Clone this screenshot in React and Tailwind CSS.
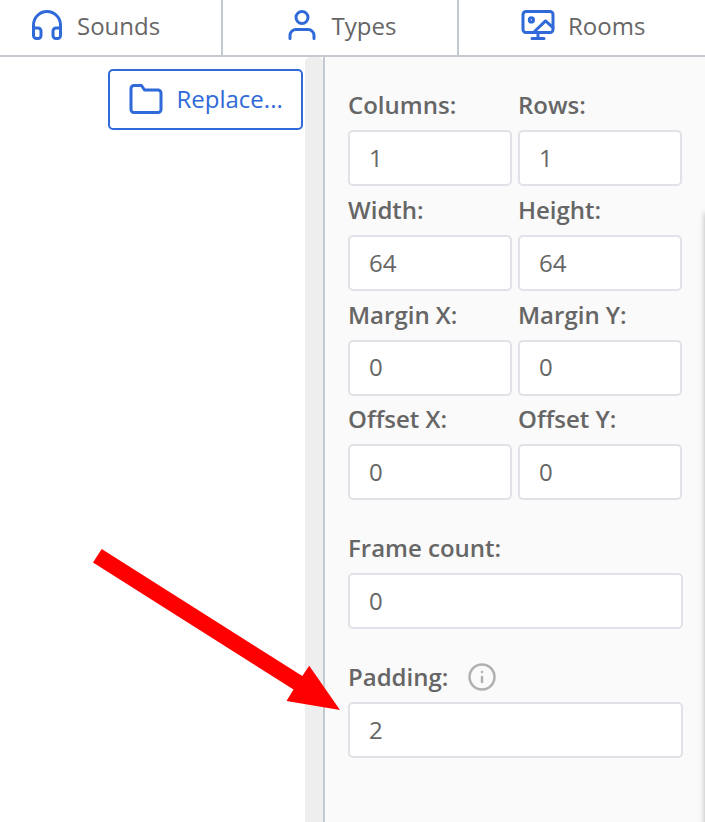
function Icon({ size = 36, className, children }) {
  return (
    <svg
      width={size}
      height={size}
      viewBox="0 0 24 24"
      fill="none"
      stroke="currentColor"
      strokeWidth="2"
      strokeLinecap="round"
      strokeLinejoin="round"
      className={className}
    >
      {children}
    </svg>
  );
}

function Headphones() {
  return (
    <Icon className="shrink-0 text-[#3069d8]">
      <path d="M3 18v-6a9 9 0 0 1 18 0v6" />
      <path d="M21 19a2 2 0 0 1-2 2h-1a2 2 0 0 1-2-2v-3a2 2 0 0 1 2-2h3zM3 19a2 2 0 0 0 2 2h1a2 2 0 0 0 2-2v-3a2 2 0 0 0-2-2H3z" />
    </Icon>
  );
}

function User() {
  return (
    <Icon className="shrink-0 text-[#3069d8]">
      <path d="M20 21v-2a4 4 0 0 0-4-4H8a4 4 0 0 0-4 4v2" />
      <circle cx="12" cy="7" r="4" />
    </Icon>
  );
}

function Room() {
  return (
    <Icon className="shrink-0 text-[#3069d8]">
      <rect x="2" y="3" width="20" height="14" rx="2" />
      <path d="M8 21h8M12 17v4" />
      <circle cx="7.6" cy="8.6" r="1.4" />
      <path d="M9 17l8-7.7 5 4.4" />
    </Icon>
  );
}

function Folder() {
  return (
    <Icon className="shrink-0">
      <path d="M22 19a2 2 0 0 1-2 2H4a2 2 0 0 1-2-2V5a2 2 0 0 1 2-2h5l2 3h9a2 2 0 0 1 2 2z" />
    </Icon>
  );
}

function Info() {
  return (
    <Icon size={30} className="shrink-0 text-[#b0b0b0]">
      <circle cx="12" cy="12" r="10" />
      <path d="M12 16v-4M12 8h.01" />
    </Icon>
  );
}

function Field({ label, value, icon }) {
  return (
    <div className="min-w-0">
      <div className="flex h-9 items-center gap-[19px] font-semibold leading-9">
        <span>{label}</span>
        {icon}
      </div>
      <input
        defaultValue={value}
        className="mt-[7px] block h-14 w-full rounded-[5px] border-2 border-[#e1e1e7] bg-white px-[19px] pb-[1.4px] outline-none"
      />
    </div>
  );
}

export default function App() {
  return (
    <div className="relative flex h-[822px] w-[705px] flex-col overflow-hidden bg-white font-['Open_Sans',sans-serif] text-[24px] leading-9 text-[#666]">
      <nav className="flex h-[57px] shrink-0 border-b-2 border-[#c5cad0]">
        <div className="flex w-[223px] gap-3 border-r-2 border-[#c5cad0] pl-[29px] pt-[7px]">
          <Headphones />
          <span className="mt-px">Sounds</span>
        </div>
        <div className="flex w-[236px] gap-[11.5px] border-r-2 border-[#c5cad0] pl-[61px] pt-[7px]">
          <User />
          <span className="mt-px">Types</span>
        </div>
        <div className="flex grow gap-3 pl-[61px] pt-[7px]">
          <Room />
          <span className="mt-px">Rooms</span>
        </div>
      </nav>

      <div className="flex grow">
        <main className="flex w-[305px] justify-end pr-[2px] pt-3">
          <button className="flex h-[61px] w-[195px] items-center gap-[12.5px] rounded-[5px] border-2 border-[#3069d8] pb-[1.5px] pl-[18px] text-[#3069d8]">
            <Folder />
            <span>Replace...</span>
          </button>
        </main>
        <div className="w-[18px] rounded-t-[5px] bg-[#eee]" />
        <aside className="grow border-l-2 border-[#c5cad0] bg-[#fafafa] pl-[23px] pt-[30px]">
          <div className="grid w-[334px] grid-cols-2 gap-x-[6px] gap-y-[5.8px]">
            <Field label="Columns:" value="1" />
            <Field label="Rows:" value="1" />
            <Field label="Width:" value="64" />
            <Field label="Height:" value="64" />
            <Field label="Margin X:" value="0" />
            <Field label="Margin Y:" value="0" />
            <Field label="Offset X:" value="0" />
            <Field label="Offset Y:" value="0" />
          </div>
          <div className="mt-[30px] flex w-[335px] flex-col gap-[30px]">
            <Field label="Frame count:" value="0" />
            <Field label="Padding:" value="2" icon={<Info />} />
          </div>
        </aside>
      </div>

      {/* Edge shadow of the panel beyond the right side */}
      <div className="absolute left-[705px] top-[213px] h-[640px] w-10 shadow-[0_0_6px_rgba(0,0,0,0.28)]" />

      <svg
        className="pointer-events-none absolute left-[93px] top-[549px]"
        width="248"
        height="162"
        viewBox="93 549 248 162"
      >
        <path
          fill="#ff0000"
          d="M101.7 549 302.3 676 309.2 665.7 340 710 286.5 701 293.5 689.5 93 562.5Z"
        />
      </svg>
    </div>
  );
}
